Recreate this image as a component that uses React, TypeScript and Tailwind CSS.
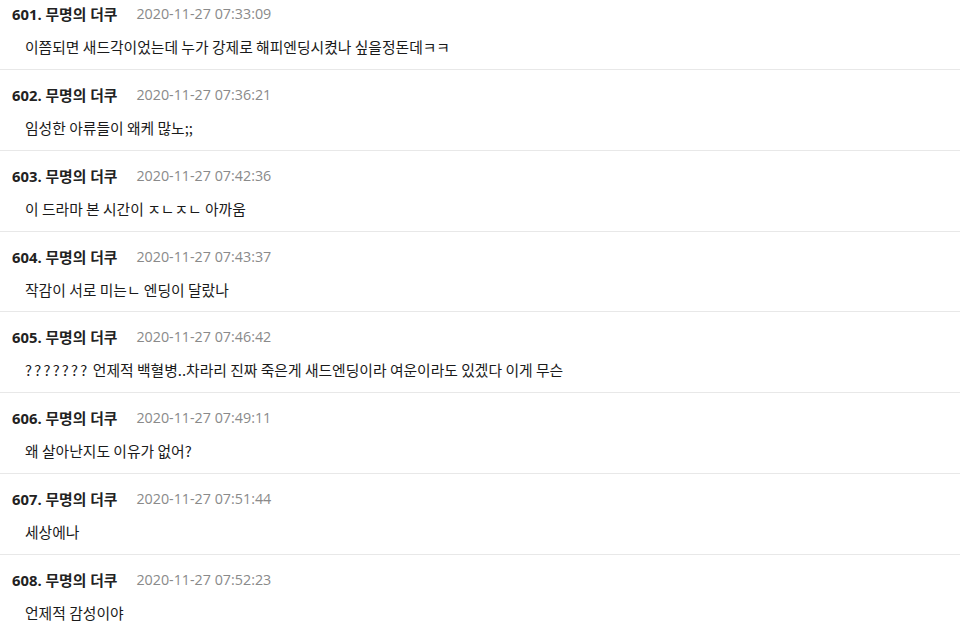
import React from 'react';

type Comment = {
  no: number;
  date: string;
  text: React.ReactNode;
};

const comments: Comment[] = [
  { no: 601, date: '2020-11-27 07:33:09', text: '이쯤되면 새드각이었는데 누가 강제로 해피엔딩시켰나 싶을정돈데ㅋㅋ' },
  { no: 602, date: '2020-11-27 07:36:21', text: '임성한 아류들이 왜케 많노;;' },
  { no: 603, date: '2020-11-27 07:42:36', text: '이 드라마 본 시간이 ㅈㄴㅈㄴ 아까움' },
  { no: 604, date: '2020-11-27 07:43:37', text: '작감이 서로 미는ㄴ 엔딩이 달랐나' },
  {
    no: 605,
    date: '2020-11-27 07:46:42',
    text: (
      <>
        <span className="tracking-[2.2px]">???????</span> 언제적 백혈병..차라리 진짜 죽은게 새드엔딩이라 여운이라도 있겠다 이게 무슨
      </>
    ),
  },
  { no: 606, date: '2020-11-27 07:49:11', text: '왜 살아난지도 이유가 없어?' },
  { no: 607, date: '2020-11-27 07:51:44', text: '세상에나' },
  { no: 608, date: '2020-11-27 07:52:23', text: '언제적 감성이야' },
];

const CommentRow = ({ c }: { c: Comment }) => (
  <li className="border-b border-[#e8e8e8] pt-[15px] pb-[10.8px]">
    <div className="flex items-center h-5 pl-[12px] leading-5">
      <span className="font-bold text-[14.8px] text-[#222]">
        {c.no}. 무명의 더쿠
      </span>
      <span className="ml-[19px] text-[14.3px] text-[#8a8a8a]">{c.date}</span>
    </div>
    <p
      className="mt-[12px] pl-[25px] text-[14.8px] leading-[22px] text-[#1a1a1a]"
      style={{ fontFamily: '"Noto Sans CJK KR", "Open Sans", sans-serif' }}
    >
      {c.text}
    </p>
  </li>
);

export default function App() {
  return (
    <div
      className="w-[960px] h-[634px] overflow-hidden bg-white"
      style={{ fontFamily: '"Open Sans", "Noto Sans CJK KR", sans-serif' }}
    >
      <ul className="-mt-[10.8px]">
        {comments.map((c) => (
          <CommentRow key={c.no} c={c} />
        ))}
      </ul>
    </div>
  );
}
